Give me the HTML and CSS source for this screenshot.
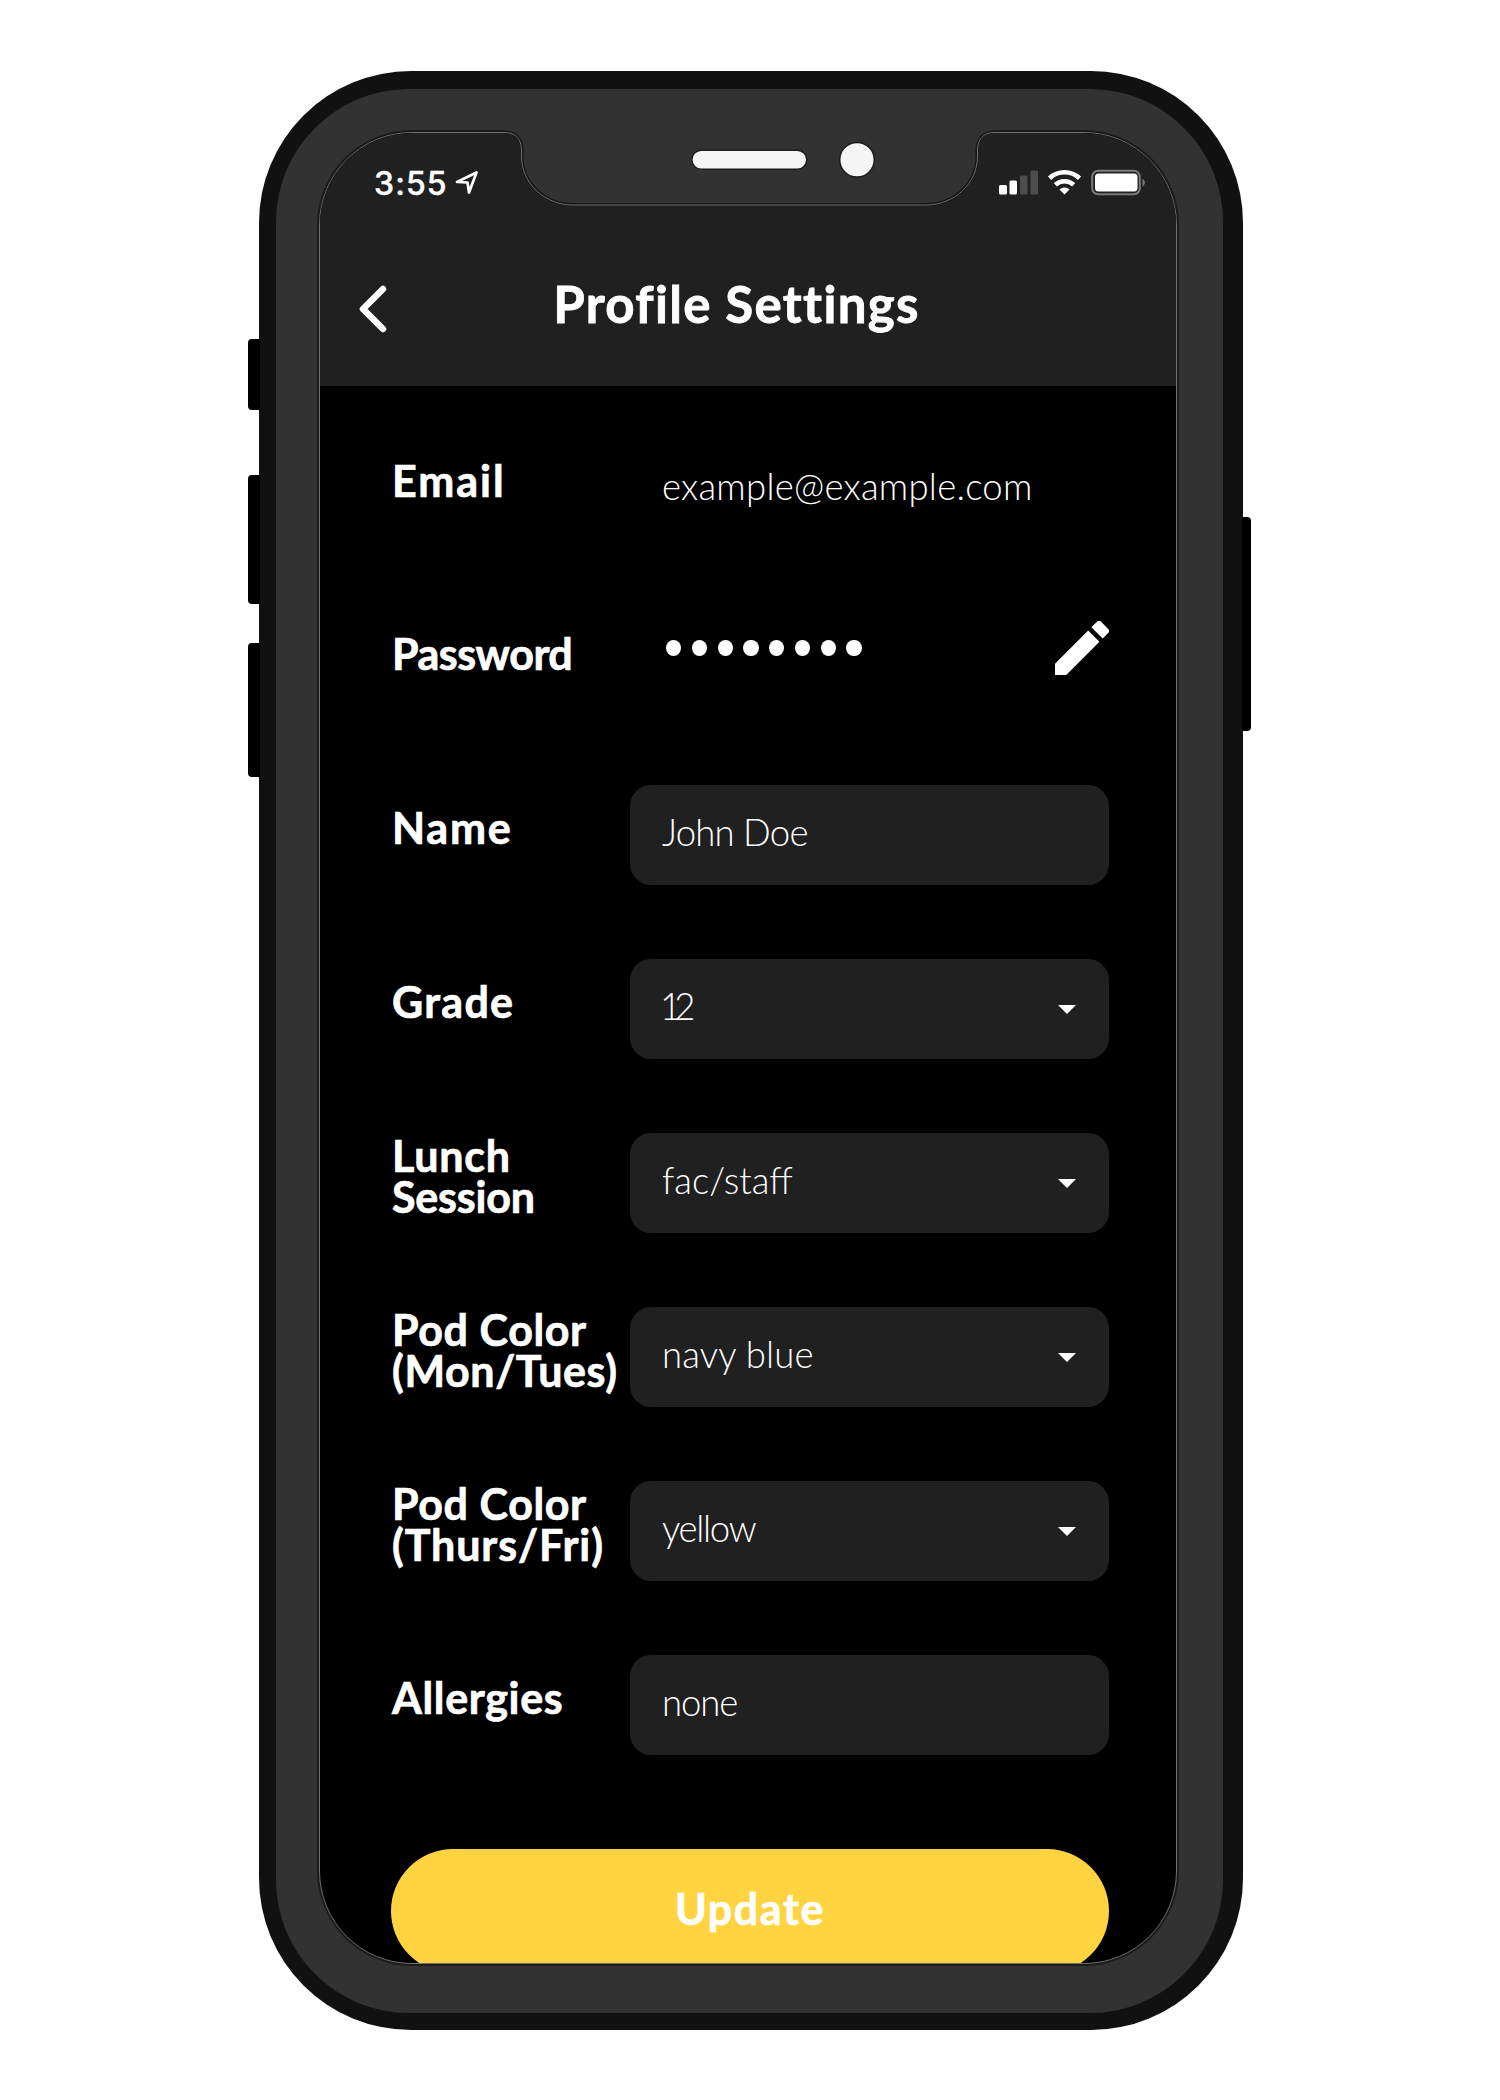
FILE: index.html
```html
<!DOCTYPE html>
<html lang="en">
<head>
<meta charset="utf-8">
<title>Profile Settings</title>
<link rel="stylesheet" href="styles.css">
</head>
<body>
<main class="phone">
  <i class="key key-mute"></i><i class="key key-up"></i><i class="key key-down"></i><i class="key key-power"></i>
  <div class="bezel">
    <div class="screen">
      <header class="header">
        <div class="status">
          <span class="time">3:55</span>
          <svg class="location" viewBox="0 0 24 25"><path d="M2 12 L21.500 2.500 L14 22.500 L12.500 12.500 Z" fill="none" stroke="#fff" stroke-width="2.700" stroke-linejoin="round"/></svg>
          <svg class="indicators" viewBox="0 0 150 28">
            <g fill="#fff"><rect x="1" y="16" width="8" height="9.500" rx="1.500"/><rect x="11.500" y="11.500" width="7.500" height="14" rx="1.500"/></g>
            <g fill="#4d4d4d"><rect x="22" y="6.500" width="7.500" height="19" rx="1.500"/><rect x="32.500" y="1.500" width="7.500" height="24" rx="1.500"/></g>
            <g fill="none" stroke="#fff" stroke-width="4.600"><path d="M51.500 9.200 a22 22 0 0 1 30 0"/><path d="M57.300 15.800 a13.500 13.500 0 0 1 18.400 0"/></g>
            <path d="M66.500 25.500 l-5 -5 a7.500 7.500 0 0 1 10 0 z" fill="#fff"/>
            <rect x="94.200" y="1.700" width="47.600" height="23.600" rx="6" fill="none" stroke="#7c7c7c" stroke-width="2"/>
            <rect x="97" y="4.500" width="42.500" height="18" rx="3.500" fill="#fff"/>
            <path d="M144.500 9.500 q4.500 4 0 8.500 z" fill="#7c7c7c"/>
          </svg>
        </div>
        <div class="titlebar">
          <svg class="back" viewBox="0 0 28 48"><path d="M24 4 L4 24 L24 44" fill="none" stroke="#fff" stroke-width="6.500" stroke-linecap="round" stroke-linejoin="round"/></svg>
          <h1 class="title">Profile Settings</h1>
        </div>
      </header>
      <form class="form">
        <div class="row row-email"><div class="label"><span class="email">Email</span></div><div class="value"><span class="address">example@example.com</span></div></div>
        <div class="row"><div class="label"><span class="pass">Password</span></div>
          <div class="value password"><div class="dots"><i></i><i></i><i></i><i></i><i></i><i></i><i></i><i></i></div>
            <svg class="pencil" viewBox="3 3 18 18"><path fill="#fff" d="M3 17.250V21h3.750L17.810 9.940l-3.750-3.750L3 17.250zM20.710 7.040a1 1 0 0 0 0-1.410l-2.340-2.340a1 1 0 0 0-1.410 0l-1.830 1.830 3.750 3.750 1.830-1.830z"/></svg></div></div>
        <div class="row"><div class="label"><span class="name">Name</span></div><div class="value field"><span class="person">John Doe</span></div></div>
        <div class="row"><div class="label"><span class="grade">Grade</span></div><div class="value field select"><span class="number">12</span></div></div>
        <div class="row"><div class="label"><span class="lunch">Lunch</span><span class="session">Session</span></div><div class="value field select"><span>fac/staff</span></div></div>
        <div class="row"><div class="label"><span class="pod">Pod Color</span><span class="pod">(Mon/Tues)</span></div><div class="value field select"><span class="navy">navy blue</span></div></div>
        <div class="row"><div class="label"><span class="pod">Pod Color</span><span class="thurs">(Thurs/Fri)</span></div><div class="value field select"><span class="yellow">yellow</span></div></div>
        <div class="row"><div class="label"><span class="allergies">Allergies</span></div><div class="value field"><span class="none">none</span></div></div>
        <div class="update"><span>Update</span></div>
      </form>
    </div>
    <svg class="notch" viewBox="0 0 490 80">
      <path d="M0 0 V6 C11 6 17 14 17 24 V30 C17 57 40 78.500 68 78.500 H421 C449 78.500 472 57 472 30 V24 C472 14 478 6 489 6 V0 Z" fill="#323232"/>
      <path d="M0 6 C11 6 17 14 17 24 V30 C17 57 40 78.500 68 78.500 H421 C449 78.500 472 57 472 30 V24 C472 14 478 6 489 6" fill="none" stroke="#171717" stroke-width="3"/>
      <path d="M0 6.500 C11 6.500 16.500 14 16.500 24 V30 C16.500 58 40 79 68 79 H421 C449 79 472.500 58 472.500 30 V24 C472.500 14 478 6.500 489 6.500" fill="none" stroke="#6e6e6e" stroke-width="1"/>
      <rect x="186.800" y="24.300" width="115" height="19" rx="9.500" fill="#f5f5f5" stroke="#1d1d1d" stroke-width="1.500"/>
      <circle cx="352" cy="33.800" r="17.300" fill="#f5f5f5" stroke="#1d1d1d" stroke-width="1.500"/>
    </svg>
  </div>
</main>
</body>
</html>
```
FILE: styles.css
```css
* { box-sizing: border-box; }
body { margin: 0; background: #fff; color: #fff; font-family: Lato, "Liberation Sans", sans-serif; }
.phone { position: relative; width: 984px; height: 1959px; margin: 71px 0 0 259px; padding: 18px 20px 17px 17px; border-radius: 152px; background: #111; }
.key { position: absolute; left: -11px; width: 12px; background: #000; border-radius: 4px 0 0 4px; }
.key-mute { top: 268px; height: 71px; }
.key-up { top: 404px; height: 129px; }
.key-down { top: 572px; height: 134px; }
.key-power { left: auto; right: -8px; width: 9px; top: 446px; height: 214px; border-radius: 0 4px 4px 0; }
.bezel { position: relative; height: 100%; padding: 43px 46px 49px 43px; border-radius: 133px; background: #323232; }
.screen { height: 1832px; border: 1px solid #6e6e6e; border-radius: 93px; background: #000; overflow: hidden; box-shadow: 0 0 0 2px #1b1b1b; }
.notch { position: absolute; left: 229px; top: 37px; width: 490px; height: 80px; }

.header { height: 253px; background: #202020; }
.status { display: flex; align-items: flex-start; padding: 36px 28px 0 54px; height: 110px; }
.time { font: 500 32px/29px Inter, sans-serif; letter-spacing: 1.1px; -webkit-text-stroke: 0.4px #fff; }
.location { width: 24px; height: 25px; margin: 1px 0 0 7px; }
.indicators { width: 150px; height: 28px; margin-left: auto; }
.titlebar { display: grid; grid-template-columns: 28px 1fr 50px; align-items: start; padding: 42px 40px 0 39px; }
.back { width: 28px; height: 48px; }
.title { margin: -11px 0 0; justify-self: center; font-size: 51px; line-height: 60px; font-weight: 700; letter-spacing: 1.3px; white-space: nowrap; -webkit-text-stroke: 0.8px #fff; }

.form { padding: 51px 67px 0 71px; }
.row { display: grid; grid-template-columns: 239px 479px; height: 100px; margin-bottom: 74px; }
.label { display: flex; flex-direction: column; justify-content: center; align-items: flex-start; padding: 0 0 14px 1px; font-size: 43px; line-height: 41.500px; font-weight: 700; white-space: nowrap; -webkit-text-stroke: 0.7px #fff; }
.value { display: flex; align-items: center; padding: 0 33px 7px 32px; font-size: 36.500px; font-weight: 300; white-space: nowrap; }
.row-email .label { padding-bottom: 12px; }
.row-email .value { padding-bottom: 3px; }
.field { background: #202020; border-radius: 21px; }
.select::after { content: ""; margin: 0 0 -7px auto; border: 9px solid transparent; border-top: 9px solid #fff; border-bottom: 0; }
.password { align-items: flex-start; padding: 10px 0 0 36px; }
.dots { display: flex; gap: 10.600px; padding-top: 19px; }
.dots i { width: 15.200px; height: 16px; border-radius: 50%; background: #fff; }
.pencil { width: 54px; height: 54px; margin-left: auto; }
.update { display: flex; justify-content: center; height: 124px; margin-top: 94px; padding-top: 39px; border-radius: 62px; background: #ffd440; font-size: 43px; line-height: 41.500px; font-weight: 700; letter-spacing: 1.6px; -webkit-text-stroke: 0.7px #fff; }

/* Tracking per word */
.email { letter-spacing: 2px; }
.pass { letter-spacing: -0.5px; }
.name { letter-spacing: 1.8px; }
.grade { letter-spacing: 1.3px; }
.lunch { letter-spacing: 0.8px; }
.session { letter-spacing: -0.2px; }
.pod { letter-spacing: 0.6px; }
.thurs { letter-spacing: 0.9px; }
.allergies { letter-spacing: 0.65px; }
.address { letter-spacing: 0.25px; }
.person { letter-spacing: -0.75px; }
.number { letter-spacing: -7px; margin-left: -2px; }
.navy { letter-spacing: 0.15px; }
.yellow { letter-spacing: -1.3px; }
.none { letter-spacing: -1.1px; }
```
